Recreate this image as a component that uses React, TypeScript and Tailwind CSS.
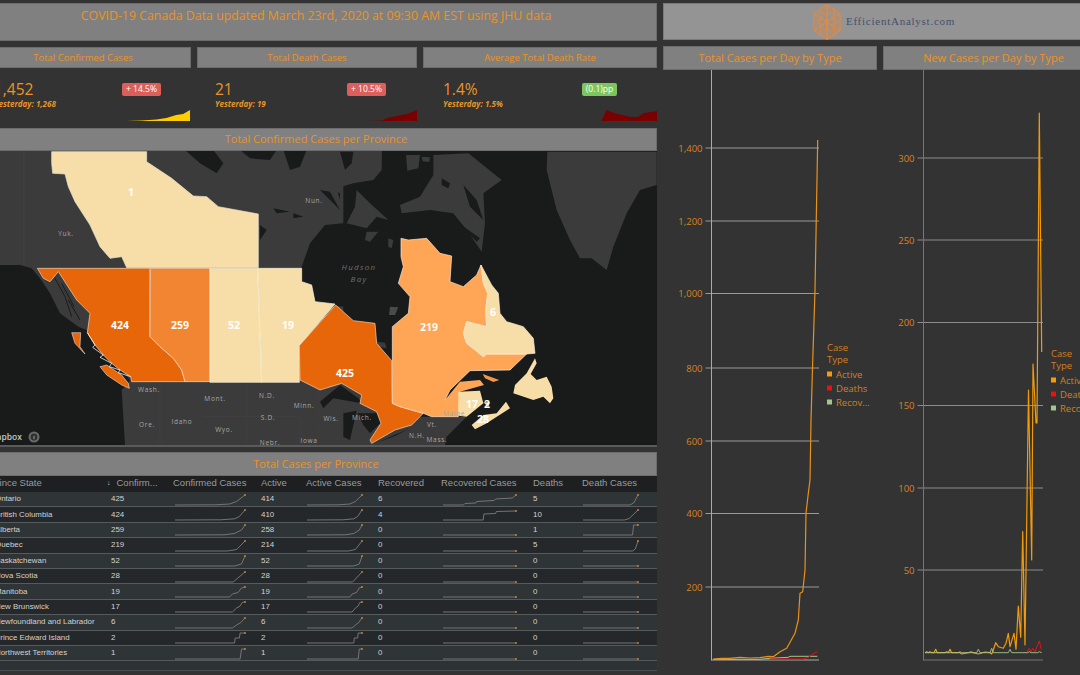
import React from "react";

const PALE = "#f7dea8";
const DEEP = "#e8660a";
const WATER = "#191a1a";
const LAND = "#3b3b3b";

type Pt = [number, number];
const FLAT: Pt[] = [[0, 0], [1, 0]];

const rows: { name: string; c: number; a: number; r: number; d: number; cs: Pt[]; rs: Pt[]; ds: Pt[] }[] = [
  { name: "Ontario", c: 425, a: 414, r: 6, d: 5, cs: [[0, 0], [.58, .02], [.78, .1], [.88, .35], [1, 1]], rs: [[0, 0], [.28, 0], [.3, .15], [.45, .2], [.46, .35], [.7, .45], [.72, .6], [.95, .7], [1, 1]], ds: [[0, 0], [.85, 0], [.92, .2], [1, 1]] },
  { name: "British Columbia", c: 424, a: 410, r: 4, d: 10, cs: [[0, 0], [.65, .02], [.85, .12], [.92, .35], [1, 1]], rs: [[0, 0], [.55, 0], [.56, .6], [.72, .65], [.73, .85], [1, .9]], ds: [[0, 0], [.75, 0], [.84, .15], [1, 1]] },
  { name: "Alberta", c: 259, a: 258, r: 0, d: 1, cs: [[0, 0], [.7, .02], [.85, .15], [.95, .5], [1, 1]], rs: FLAT, ds: [[0, 0], [.9, 0], [.92, 1], [1, 1]] },
  { name: "Quebec", c: 219, a: 214, r: 0, d: 5, cs: [[0, 0], [.75, 0], [.88, .15], [1, 1]], rs: FLAT, ds: [[0, 0], [.9, 0], [.95, .2], [1, 1]] },
  { name: "Saskatchewan", c: 52, a: 52, r: 0, d: 0, cs: [[0, 0], [.85, 0], [.95, .2], [1, 1]], rs: FLAT, ds: FLAT },
  { name: "Nova Scotia", c: 28, a: 28, r: 0, d: 0, cs: [[0, 0], [.83, 0], [1, 1]], rs: FLAT, ds: FLAT },
  { name: "Manitoba", c: 19, a: 19, r: 0, d: 0, cs: [[0, 0], [.78, 0], [.82, .3], [.9, .45], [.95, .9], [1, 1]], rs: FLAT, ds: FLAT },
  { name: "New Brunswick", c: 17, a: 17, r: 0, d: 0, cs: [[0, 0], [.82, 0], [.88, .4], [.93, .6], [.96, .95], [1, 1]], rs: FLAT, ds: FLAT },
  { name: "Newfoundland and Labrador", c: 6, a: 6, r: 0, d: 0, cs: [[0, 0], [.82, 0], [.88, .3], [.94, .55], [1, 1]], rs: FLAT, ds: FLAT },
  { name: "Prince Edward Island", c: 2, a: 2, r: 0, d: 0, cs: [[0, 0], [.85, 0], [.86, .5], [.92, .5], [.93, 1], [1, 1]], rs: FLAT, ds: FLAT },
  { name: "Northwest Territories", c: 1, a: 1, r: 0, d: 0, cs: [[0, 0], [.93, 0], [.95, 1], [1, 1]], rs: FLAT, ds: FLAT },
];

function Spark({ pts, w }: { pts: Pt[]; w: number }) {
  const h = 13;
  const s = pts.map(([x, y]) => `${(x * (w - 1)).toFixed(1)},${(h - 1 - y * (h - 3)).toFixed(1)}`).join(" ");
  const [lx, ly] = pts[pts.length - 1];
  return (
    <svg width={w} height={h} className="block">
      <polyline points={s} fill="none" stroke="#7c7c7c" strokeWidth="0.9" />
      <circle cx={lx * (w - 1)} cy={h - 1 - ly * (h - 3)} r="0.9" fill="#d8862c" />
    </svg>
  );
}

function Bar({ children, className = "" }: { children: React.ReactNode; className?: string }) {
  return (
    <div className={`flex items-center justify-center bg-[#808080] border border-[#6c6c6c] text-[#ea9326] font-['Open_Sans',sans-serif] ${className}`}>
      {children}
    </div>
  );
}

function Kpi({ title, value, y, badge, badgeClass, rightW, pl, spark, sparkFill }: { title: string; value: string; y: string; badge: string; badgeClass: string; rightW: string; pl: string; spark: string; sparkFill: string }) {
  return (
    <div className="flex flex-col">
      <Bar className="h-[21px] text-[9.5px] pt-[1px]">{title}</Bar>
      <div className={`flex justify-between h-[59px] ${pl}`}>
        <div className="pt-[12px] font-['Open_Sans',sans-serif] text-[#ea9326]">
          <div className="text-[15.5px] leading-[19px]">{value}</div>
          <div className="text-[8px] leading-[10px] font-bold italic whitespace-nowrap">{y}</div>
        </div>
        <div className={`flex flex-col ${rightW} pt-[15px]`}>
          <div className={`self-start flex items-center justify-center h-[13px] rounded-[2px] text-[8.5px] text-white font-['Open_Sans',sans-serif] ${badgeClass}`}>{badge}</div>
          <svg viewBox="0 0 70 11" preserveAspectRatio="none" className="mt-[14px] h-[11px] w-full block">
            <polygon points={spark} fill={sparkFill} />
          </svg>
        </div>
      </div>
    </div>
  );
}

function MapChart() {
  const lbl = "#a8a8a8";
  const small: [string, number, number][] = [
    ["Yuk.", 66, 236], ["Nun.", 314, 203], ["Wash.", 149, 392], ["Mont.", 215, 401], ["N.D.", 267, 398], ["Minn.", 304, 408],
    ["S.D.", 268, 420], ["Wis.", 331, 421], ["Idaho", 182, 424], ["Ore.", 147, 427], ["Wyo.", 224, 432], ["Mich.", 362, 420],
    ["Vt.", 432, 427], ["N.H.", 417, 438], ["Mass.", 437, 442], ["Maine", 454, 416], ["Iowa", 309, 443], ["Nebr.", 270, 445],
  ];
  const big: [string, number, number][] = [
    ["1", 131, 192], ["424", 120, 325], ["259", 180, 325], ["52", 234, 325], ["19", 288, 325], ["219", 429, 327],
    ["6", 493, 312], ["425", 345, 373], ["17", 472, 404], ["2", 487, 404], ["28", 483, 419],
  ];
  return (
    <svg viewBox="-25 151 682 294" className="block w-full h-[294px]">
      <rect x="-25" y="151" width="682" height="294" fill={WATER} />
      {/* western half */}
      <g transform="translate(0 150) scale(0.33333)">
        <polygon fill={LAND} points="-80,0 1030,0 1030,220 975,225 930,280 905,350 905,395 935,405 945,460 1030,470 1030,885 375,885 365,720 385,700 390,690 260,540 235,530 180,490 150,430 120,385 95,355 60,345 0,345 -80,340" />
        <line x1="72" y1="5" x2="72" y2="345" stroke="#4b4b4b" strokeWidth="1.5" />
        <path d="M555,0 L640,0 L670,40 L650,70 L600,40 Z M720,0 L830,0 L810,30 L750,25 Z M850,0 L920,0 L900,50 L870,60 Z M990,120 L1020,130 L1020,150 Z M780,225 L800,240 L780,270 Z M820,175 L870,185 L830,190 Z M880,190 L910,200 L880,205 Z" fill={WATER} />
        <path d="M165,385 L195,440 L215,500 M185,400 L222,470 M205,450 L240,510" stroke={WATER} strokeWidth="3" fill="none" />
        <path d="M740,700 V885 M610,800 H900 M480,700 V885 M900,800 V885" stroke="#494949" strokeWidth="1.2" fill="none" />
        <polygon fill={PALE} stroke="#e9e2d4" strokeWidth="2" points="155,5 440,5 440,35 515,85 580,138 620,140 655,170 775,192 775,353 380,353 365,320 330,325 300,290 270,225 225,155 205,110 195,72 158,70 155,40" />
        <polygon fill={DEEP} stroke="#f3d9c0" strokeWidth="2" points="112,355 450,355 450,560 480,590 520,625 545,660 555,695 395,695 392,680 360,660 335,640 310,615 285,585 262,548 270,490 230,450 175,365 150,395 130,385" />
        <polygon fill={DEEP} stroke="#fff" strokeWidth="1.5" points="300,650 320,645 365,675 385,700 388,715 365,705 320,675" />
        <polygon fill={DEEP} stroke="#fff" strokeWidth="1.5" points="215,548 242,548 240,590 255,612 225,580" />
        <path d="M262,548 L285,585 L278,592 L310,615 L300,622 L335,640 L328,650 L360,660 L355,668 L392,680" fill="none" stroke="#fff" strokeWidth="2.2" />
        <polygon fill="#f18532" stroke="#f7e6d2" strokeWidth="2" points="451,355 630,355 630,695 555,695 545,660 520,625 480,590 450,560" />
        <polygon fill={PALE} stroke="#fbf3e0" strokeWidth="2" points="630,355 773,355 785,697 630,697" />
        <polygon fill={PALE} stroke="#fbf3e0" strokeWidth="2" points="773,355 905,355 905,395 935,405 945,455 1005,462 898,587 898,697 785,697" />
      </g>
      {/* eastern half */}
      <g transform="translate(320 150) scale(0.33333)">
        <polygon fill={LAND} points="60,0 186,0 185,60 160,90 100,100 50,115 70,185 30,190 0,240 0,0" />
        <polygon fill={WATER} points="60,5 100,5 95,40 75,60" />
        <polygon fill={WATER} points="0,120 30,125 60,180 30,150" />
        <polygon fill={LAND} points="110,120 150,160 205,210 170,200 140,235 80,220 105,170" />
        <polygon fill={LAND} points="140,245 175,245 150,275 135,270" />
        <polygon fill={LAND} points="205,265 220,270 215,295 205,290" />
        <polygon fill={LAND} points="258,15 300,15 295,55 262,62" />
        <polygon fill={LAND} points="305,20 330,22 328,36 308,34" />
        <polygon fill={LAND} points="240,165 300,140 340,75 340,15 445,10 545,90 490,130 495,220 485,305 440,240 400,190 330,180 245,190" />
        <polygon fill={WATER} points="365,85 390,100 385,115 365,105" />
        <polygon fill={WATER} points="430,105 470,150 490,210 450,170" />
        <polygon fill={WATER} points="410,215 480,265 470,275" />
        <polygon fill={LAND} points="682,5 1010,5 1010,105 960,120 920,190 880,290 860,360 815,325 780,325 750,270 710,180 680,60" />
        <polygon fill="#4a4a4a" points="210,470 235,472 225,495 207,495" />
        <polygon fill={LAND} points="-20,700 160,700 240,760 300,800 440,800 380,860 375,885 -20,885" />
        <path d="M0,755 L60,705 L115,745 L125,760 L40,745 L10,775 Z M70,790 L110,782 L90,870 L70,860 Z M112,790 L170,790 L185,815 L150,850 L130,825 Z M170,878 L270,835 L225,858 Z" fill={WATER} />
        <polygon fill={LAND} points="170,575 195,578 200,595 175,590" />
        <polygon fill={DEEP} stroke="#f3d9c0" strokeWidth="2" points="47,465 100,512 165,520 170,580 215,632 217,760 240,770 310,790 275,825 225,840 155,880 150,870 183,820 170,785 120,760 125,735 65,700 0,720 -60,690 -62,587" />
        <polygon fill="#ffa556" stroke="#fde9d6" strokeWidth="2" points="243,265 265,270 320,265 360,310 395,318 390,395 430,410 470,375 483,345 490,400 503,430 497,480 500,530 440,515 430,550 440,580 490,620 500,612 620,612 570,660 450,662 390,720 375,750 420,725 415,800 335,800 310,790 240,770 217,760 217,530 265,490 270,440 235,400 250,350 243,320" />
        <polygon fill={PALE} stroke="#fbf3e0" strokeWidth="2" points="483,345 515,405 535,430 540,490 560,515 610,530 640,565 645,610 620,612 500,612 490,620 440,580 430,550 440,515 500,530 497,480 503,430 490,400" />
        <polygon fill={PALE} points="645,625 650,640 632,672 650,690 680,680 695,710 700,745 690,760 670,740 640,750 580,730 585,705 620,670" />
        <polygon fill="#f0954a" points="488,672 538,690 520,696 495,685" />
        <polygon fill="#ffa556" points="375,750 420,695 480,690 492,705 420,725" />
        <polygon fill={PALE} points="415,725 480,722 490,760 440,800 415,797" />
        <polygon fill={PALE} points="490,757 510,757 505,770" />
        <polygon fill={PALE} points="558,755 570,775 500,820 465,838 455,825 490,795 530,790" />
      </g>
      <g fontFamily="'Open Sans',sans-serif" fontSize="6.5" fill={lbl} textAnchor="middle" letterSpacing="0.7">
        {small.map(([t, x, y]) => <text key={t} x={x} y={y}>{t}</text>)}
      </g>
      <g fontFamily="'Open Sans',sans-serif" fontSize="8" fontStyle="italic" fill="#6f6f6f" textAnchor="middle" letterSpacing="1.3">
        <text x="359" y="270">Hudson</text>
        <text x="359" y="282">Bay</text>
      </g>
      <g fontFamily="'Open Sans',sans-serif" fontSize="10.5" fontWeight="700" fill="#fff" textAnchor="middle">
        {big.map(([t, x, y]) => <text key={t} x={x} y={y + 4}>{t}</text>)}
      </g>
      <text x="22" y="440" textAnchor="end" fontFamily="'Open Sans',sans-serif" fontSize="8.5" fontWeight="600" fill="#c6c6c6">mapbox</text>
      <circle cx="34" cy="437" r="5.5" fill="#6a6a6a" />
      <circle cx="34" cy="437" r="3.4" fill="#2f2f2f" />
      <rect x="33.4" y="435.8" width="1.2" height="3.4" fill="#8a8a8a" />
    </svg>
  );
}

function Table() {
  const cols = "grid grid-cols-[130px_63px_87px_45px_72px_63px_92px_49px_71px]";
  return (
    <div className="bg-[#2d3234] h-[195px] border-b border-[#4a4e50] font-['Liberation_Sans',sans-serif]">
      <div className={`${cols} h-[16px] pb-[2px] bg-[#1d1f21] text-[9.5px] text-[#9b9b9b] items-center whitespace-nowrap`}>
        <div className="pl-[5px]">Province State</div>
        <div className="flex items-center pl-[2px] gap-[6px]"><span className="text-[7px] text-[#ccc]">↓</span><span>Confirm...</span></div>
        <div className="pl-[5px]">Confirmed Cases</div>
        <div className="pl-[6px]">Active</div>
        <div className="pl-[6px]">Active Cases</div>
        <div className="pl-[6px]">Recovered</div>
        <div className="pl-[6px]">Recovered Cases</div>
        <div className="pl-[6px]">Deaths</div>
        <div className="pl-[6px]">Death Cases</div>
      </div>
      {rows.map((r, i) => (
        <div key={r.name} className={`${cols} h-[15.4px] items-center border-b border-[#555a5c] text-[7.9px] text-[#d2d2d2] whitespace-nowrap ${i % 2 ? "bg-[#25282a]" : "bg-[#2f3436]"}`}>
          <div className="pl-[20px]">{r.name}</div>
          <div className="pl-[6px]">{r.c}</div>
          <div className="pl-[7px]"><Spark pts={r.cs} w={71} /></div>
          <div className="pl-[6px]">{r.a}</div>
          <div className="pl-[7px]"><Spark pts={r.cs} w={56} /></div>
          <div className="pl-[6px]">{r.r}</div>
          <div className="pl-[8px]"><Spark pts={r.rs} w={74} /></div>
          <div className="pl-[6px]">{r.d}</div>
          <div className="pl-[7px]"><Spark pts={r.ds} w={56} /></div>
        </div>
      ))}
    </div>
  );
}

function Chart({ vb, width, axisX, right, labels, lines, lx, ly, axisColor, gridColor }: { vb: string; width: string; axisX: number; right: number; labels: [string, number][]; lines: { c: string; w: number; p: string }[]; lx: number; ly: number; axisColor: string; gridColor: string }) {
  const legend: [string, string, number][] = [["Active", "#f59b0b", ly + 26], ["Deaths", "#ee0f0f", ly + 40], ["Recov...", "#a5c48e", ly + 54]];
  return (
    <svg viewBox={vb} className={`block h-[605px] ${width}`} fontFamily="'Open Sans',sans-serif">
      {labels.map(([t, y]) => (
        <g key={t}>
          <line x1={axisX - 6} x2={right} y1={y} y2={y} stroke={gridColor} strokeWidth="1" />
          <text x={axisX - 9} y={y + 3.5} textAnchor="end" fontSize="9.5" fill="#d9831f">{t}</text>
        </g>
      ))}
      <line x1={axisX} x2={axisX} y1={70} y2={660.5} stroke={axisColor} strokeWidth="1" />
      <line x1={axisX} x2={right} y1={660} y2={660} stroke={axisColor} strokeWidth="1" />
      {lines.map((l, i) => <polyline key={i} points={l.p} fill="none" stroke={l.c} strokeWidth={l.w} strokeLinejoin="round" />)}
      <text x={lx} y={ly + 3} fontSize="9.5" fill="#d2801f">Case</text>
      <text x={lx} y={ly + 15} fontSize="9.5" fill="#d2801f">Type</text>
      {legend.map(([t, c, y]) => (
        <g key={t}>
          <rect x={lx} y={y - 2.5} width="5" height="5" fill={c} />
          <text x={lx + 9} y={y + 3.5} fontSize="9.5" fill="#d2801f">{t}</text>
        </g>
      ))}
    </svg>
  );
}

const z7 = (pts: number[][]) => pts.map(([x, y]) => `${(660 + x / 3).toFixed(1)},${(480 + y / 3).toFixed(1)}`).join(" ");

const totalActive = z7([[160, 537], [185, 535], [210, 535], [240, 532], [270, 534], [300, 533], [325, 529], [340, 530], [360, 515], [380, 505], [405, 460], [415, 420], [420, 340], [428, 335], [435, 270], [438, 100], [445, 40], [450, 0]]) + " 811,420 812.5,368 815,290 817.7,140";
const totalDeaths = z7([[330, 537], [430, 537], [445, 532], [465, 518], [472, 516]]);
const totalRec = z7([[160, 538], [300, 538], [330, 535], [385, 532], [390, 529], [472, 529]]);

const newActive = z7([[795, 518], [800, 515], [805, 518], [810, 515], [815, 518], [822, 518], [827, 508], [832, 518], [855, 518], [860, 515], [865, 518], [870, 508], [875, 518], [900, 518], [905, 522], [925, 518], [933, 515], [940, 518], [955, 522], [975, 516], [990, 518], [995, 522], [1000, 510], [1007, 488], [1015, 500], [1030, 505], [1038, 490], [1045, 460], [1050, 500], [1062, 460], [1068, 508], [1075, 378], [1082, 472], [1088, 155], [1095, 495]]) + " 1028.5,390 1031.7,560 1033,364 1036,423 1037,423 1039.3,113 1041.7,352";
const newDeaths = z7([[1095, 518], [1100, 518], [1107, 505], [1113, 515], [1118, 505], [1125, 515], [1138, 483], [1144, 508]]);
const newRec = z7([[795, 518], [895, 518], [900, 515], [905, 518], [950, 518], [955, 508], [960, 518], [990, 518], [995, 505], [1000, 518], [1045, 518], [1050, 508], [1055, 518], [1103, 518], [1108, 515], [1113, 518], [1133, 518], [1138, 515], [1145, 518]]);

function Logo() {
  const cx = 15, cy = 18, r = 17.5;
  const hex = [0, 1, 2, 3, 4, 5].map((i) => {
    const a = (Math.PI / 3) * i - Math.PI / 2;
    return [cx + (r * Math.cos(a)) * 0.86, cy + r * Math.sin(a)];
  });
  const c = "#e8893a";
  return (
    <svg width="30" height="36" viewBox="0 0 30 36" className="block">
      <polygon points={hex.map((p) => p.join(",")).join(" ")} fill="none" stroke={c} strokeWidth="0.8" />
      {hex.map((p, i) => <line key={i} x1={p[0]} y1={p[1]} x2={hex[(i + 3) % 6][0]} y2={hex[(i + 3) % 6][1]} stroke={c} strokeWidth="0.6" />)}
      {hex.map((p, i) => <line key={`b${i}`} x1={p[0]} y1={p[1]} x2={hex[(i + 2) % 6][0]} y2={hex[(i + 2) % 6][1]} stroke={c} strokeWidth="0.6" />)}
      {[-7.5, 0, 7.5].map((dx) => <line key={dx} x1={cx + dx} x2={cx + dx} y1={cy - 15} y2={cy + 15} stroke={c} strokeWidth="0.5" />)}
      {hex.map((p, i) => <circle key={`c${i}`} cx={(p[0] + cx) / 2} cy={(p[1] + cy) / 2} r="7" fill="none" stroke={c} strokeWidth="0.5" />)}
      <circle cx={cx} cy={cy} r="7" fill="none" stroke={c} strokeWidth="0.5" />
    </svg>
  );
}

export default function App() {
  return (
    <div className="w-[1080px] h-[675px] overflow-hidden bg-[#333333] flex items-start">
      <div className="w-[682px] -ml-[25px] shrink-0 pt-[3px] flex flex-col">
        <Bar className="h-[38px] text-[12.35px] !items-start pt-[3px]">COVID-19 Canada Data updated March 23rd, 2020 at 09:30 AM EST using JHU data</Bar>
        <div className="grid grid-cols-[216px_220px_234px] gap-[6px] mt-[6px]">
          <Kpi title="Total Confirmed Cases" value="1,452" y="Yesterday: 1,268" badge="+ 14.5%" badgeClass="bg-[#dd5f5b] w-[39px]" rightW="w-[69px]" pl="pl-[19px]" spark="5,11 20,10.6 35,9.5 45,8 55,5 62,4 69,0 69,11" sparkFill="#ffcc00" />
          <Kpi title="Total Death Cases" value="21" y="Yesterday: 19" badge="+ 10.5%" badgeClass="bg-[#dd5f5b] w-[39px]" rightW="w-[70px]" pl="pl-[18px]" spark="18,11 35,10.5 40,8 50,6 60,4 70,0 70,11" sparkFill="#7a0000" />
          <Kpi title="Average Total Death Rate" value="1.4%" y="Yesterday: 1.5%" badge="(0.1)pp" badgeClass="bg-[#7cc660] w-[35px]" rightW="w-[75px]" pl="pl-[20px]" spark="18,11 23,0 30,3 38,5 45,7 52,7 58,3 65,2 70,1 70,11" sparkFill="#7a0000" />
        </div>
        <Bar className="h-[23px] text-[11px] mt-[1px]">Total Confirmed Cases per Province</Bar>
        <MapChart />
        <div className="h-[2px] bg-[#5a5a5a]" />
        <Bar className="h-[24px] text-[11px] mt-[5px]">Total Cases per Province</Bar>
        <Table />
      </div>
      <div className="w-[441px] ml-[6px] shrink-0 pt-[3px] flex flex-col">
        <div className="h-[37px] bg-[#949494] border border-[#7a7a7a] flex items-center justify-center gap-[4px]">
          <Logo />
          <span className="font-['Liberation_Serif',serif] text-[11px] tracking-[0.75px] text-[#44506e]">EfficientAnalyst.com</span>
        </div>
        <div className="grid grid-cols-[214px_221px] gap-x-[6px] mt-[6px]">
          <Bar className="h-[24px] text-[11px]">Total Cases per Day by Type</Bar>
          <Bar className="h-[24px] text-[11px]">New Cases per Day by Type</Bar>
          <Chart
            vb="663 70 214 605"
            width="w-[214px]"
            axisX={711.5}
            right={819}
            axisColor="#aaaaaa"
            gridColor="#9a9a9a"
            labels={[["1,400", 148], ["1,200", 221], ["1,000", 293.5], ["800", 368], ["600", 441], ["400", 513.5], ["200", 587]]}
            lines={[{ c: "#a5c48e", w: 1, p: totalRec }, { c: "#e8921a", w: 1.2, p: totalActive }, { c: "#ee0f0f", w: 1, p: totalDeaths }]}
            lx={827}
            ly={348}
          />
          <Chart
            vb="883 70 221 605"
            width="w-[221px]"
            axisX={923.5}
            right={1043}
            axisColor="#777777"
            gridColor="#8c8c8c"
            labels={[["300", 158], ["250", 240], ["200", 322.5], ["150", 405.5], ["100", 488], ["50", 570]]}
            lines={[{ c: "#f09a0c", w: 1.2, p: newActive }, { c: "#ee0f0f", w: 1, p: newDeaths }, { c: "#a5c48e", w: 0.9, p: newRec }]}
            lx={1051}
            ly={354}
          />
        </div>
      </div>
    </div>
  );
}
